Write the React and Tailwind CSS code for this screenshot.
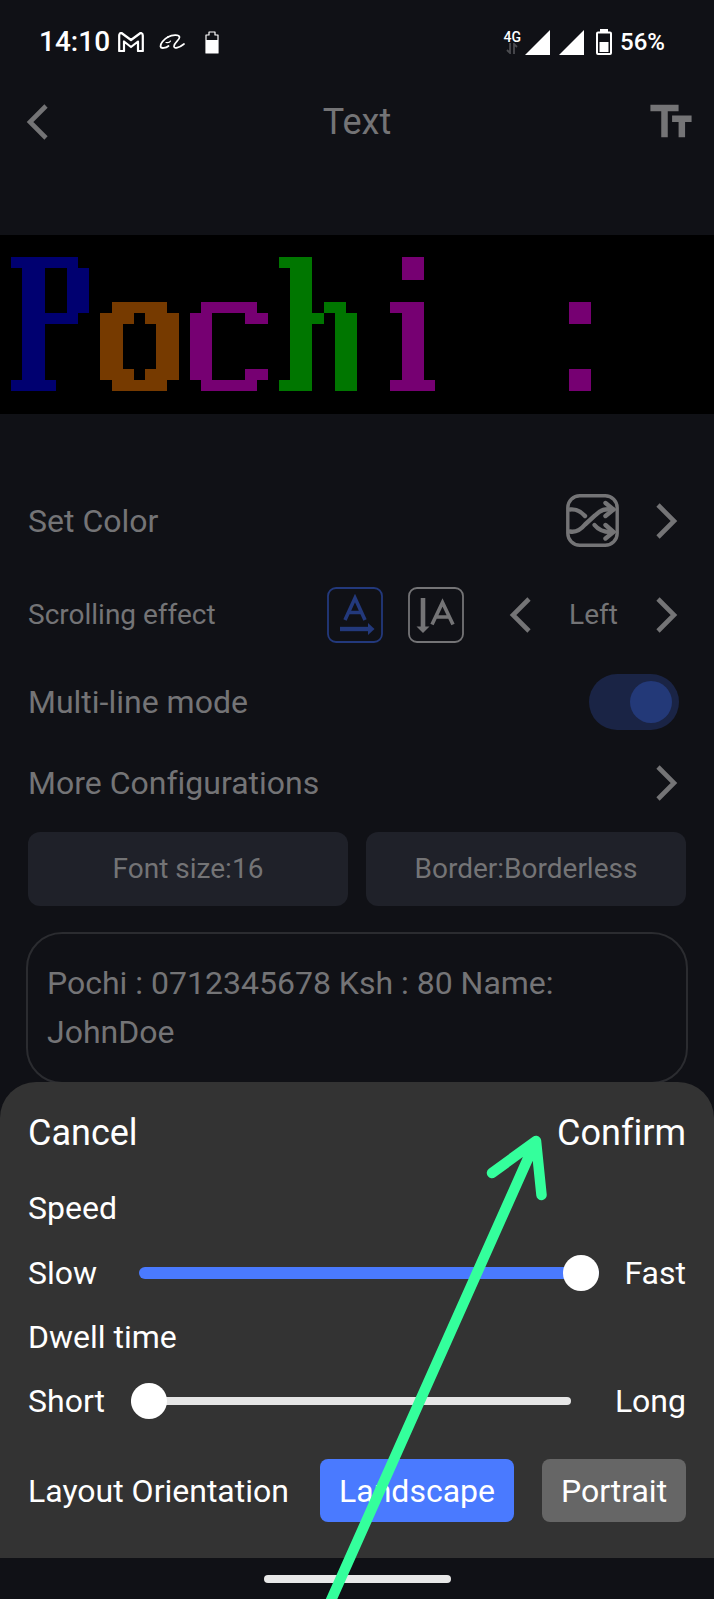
import { useState } from 'react';
import { MdTextFields } from 'react-icons/md';

// ── LED preview ──────────────────────────────────────────────────────────────
// 64 x 16 matrix. Each character is an 8-column cell; rows start at `top`.
const LED_CELLS = [
  {
    col: 1,
    top: 2,
    color: '#000070',
    rows: [
      '######..', '.##..##.', '.##..##.', '.##..##.', '.##..##.', '.#####..',
      '.##.....', '.##.....', '.##.....', '.##.....', '.##.....', '####....',
    ],
  },
  {
    col: 9,
    top: 6,
    color: '#763a00',
    rows: ['.#####..', '###.###.', '##...##.', '##...##.', '##...##.', '##...##.', '###.###.', '.#####..'],
  },
  {
    col: 17,
    top: 6,
    color: '#760072',
    rows: ['.#####..', '##...##.', '##......', '##......', '##......', '##......', '##...##.', '.#####..'],
  },
  {
    col: 25,
    top: 2,
    color: '#007600',
    rows: [
      '###.....', '.##.....', '.##.....', '.##.....', '.##.##..', '.###.##.',
      '.##..##.', '.##..##.', '.##..##.', '.##..##.', '.##..##.', '###..##.',
    ],
  },
  {
    col: 33,
    top: 2,
    color: '#760072',
    rows: [
      '...##...', '...##...', '........', '........', '..###...', '...##...',
      '...##...', '...##...', '...##...', '...##...', '...##...', '..####..',
    ],
  },
  {
    col: 49,
    top: 6,
    color: '#760072',
    rows: ['..##....', '..##....', '........', '........', '........', '........', '..##....', '..##....'],
  },
];

function LedPreview() {
  return (
    <svg viewBox="0 0 64 16" className="block w-full bg-black" shapeRendering="crispEdges" role="img" aria-label="Pochi :">
      {LED_CELLS.map((cell) =>
        cell.rows.map((row, y) =>
          [...row].map(
            (dot, x) =>
              dot === '#' && (
                <rect key={`${cell.col}-${y}-${x}`} x={cell.col + x} y={cell.top + y} width="1" height="1" fill={cell.color} />
              )
          )
        )
      )}
    </svg>
  );
}

// ── Icons ────────────────────────────────────────────────────────────────────
function Chevron({ left = false }) {
  return (
    <svg viewBox="0 0 24 40" className="block h-10 w-6" fill="none" stroke="currentColor" strokeWidth="4.6">
      <path d={left ? 'M21 4 5 20l16 16' : 'M3 4l16 16L3 36'} />
    </svg>
  );
}

function ShuffleIcon() {
  return (
    <svg viewBox="0 0 53 53" className="h-[53px] w-[53px]" fill="none" stroke="currentColor" strokeWidth="4.4" strokeLinecap="round">
      <rect x="1.8" y="1.8" width="49.4" height="49.4" rx="12" strokeWidth="3.4" />
      <path d="M4 15.500c7-.8 11 2 15 6.500M4 37.500c6 1 11-2 15-7l10-9c6-6 10-7 18-6" />
      <path d="M28.500 31c4 5 9 7.500 18 7" />
      <path d="M39.500 9l8 6.500-8 6.500M39.500 31l8 7-8 6.500" />
    </svg>
  );
}

function HorizontalIcon() {
  return (
    <svg viewBox="0 0 56 56" className="h-14 w-14" fill="none" stroke="currentColor">
      <rect x="1" y="1" width="54" height="54" rx="8" strokeWidth="1.8" />
      <path d="M18 33 28 11 38 33M21.500 25.500h13" strokeWidth="3.6" />
      <path d="M13 42h30" strokeWidth="4.4" />
      <path d="M41 36l6.500 6-6.500 6z" fill="currentColor" stroke="none" />
    </svg>
  );
}

function VerticalIcon() {
  return (
    <svg viewBox="0 0 56 56" className="h-14 w-14" fill="none" stroke="currentColor">
      <rect x="1" y="1" width="54" height="54" rx="8" strokeWidth="1.8" />
      <path d="M24 37.500 34.500 15.500 45 37.500M27.500 30h14" strokeWidth="3.6" />
      <path d="M15 11v30" strokeWidth="4.6" />
      <path d="M8.500 39.500h13L15 46z" fill="currentColor" stroke="none" />
    </svg>
  );
}

function StatusBar() {
  return (
    <div className="flex h-[84px] items-center justify-between pr-[49px] pl-[39px] text-white">
      <div className="flex items-center">
        <span className="text-[28px] leading-8 font-medium">14:10</span>
        <svg viewBox="0 0 26 20" className="ml-2 h-5 w-[26px]" fill="none" stroke="currentColor" strokeWidth="2.2" strokeLinejoin="round">
          <path d="M1.200 3.500Q1.200 1 3.500 1L13 8 22.500 1q2.300 0 2.300 2.500V19h-4.800V9.500L13 15 6 9.500V19H1.200z" />
        </svg>
        <svg viewBox="0 0 26 16" className="ml-[15px] h-4 w-[26px]" fill="none" stroke="currentColor" strokeLinecap="round">
          <path d="M9 3C5 5 1 10 1.500 12.500 2 15 7 14 9.500 12" strokeWidth="1.800" />
          <path d="M7 8.500c2 .3 4-.4 4.500-1.500" strokeWidth="1.200" />
          <path d="M9 3c4-2.200 11-3 11.500 0 .3 3-6 6-5.500 9.500.3 2.500 5 1.500 10-2.500" strokeWidth="1.700" />
        </svg>
        <svg viewBox="0 0 14 24" className="ml-5 h-6 w-[14px]">
          <path d="M1 5h3V2h6v3h3v18H1z" fill="none" stroke="currentColor" strokeWidth="1.200" strokeLinejoin="round" />
          <path d="M1 10h12v13H1z" fill="currentColor" />
        </svg>
      </div>
      <div className="flex items-center">
        <div className="flex flex-col items-center text-[14px] leading-3 font-medium">
          4G
          <svg viewBox="0 0 12 11" className="h-[11px] w-3 text-[#4b4c50]" fill="none" stroke="currentColor" strokeWidth="1.800">
            <path d="M4 0v10L1 7M8 11V1l3 3" />
          </svg>
        </div>
        {[0, 1].map((sim) => (
          <svg key={sim} viewBox="0 0 25 25" className={sim === 0 ? 'ml-1 h-[25px] w-[25px]' : 'ml-[9px] h-[25px] w-[25px]'} fill="currentColor">
            <path d="M25 0v25H0z" />
          </svg>
        ))}
        <svg viewBox="0 0 16 26" className="ml-3 h-[26px] w-4" fill="none" stroke="currentColor" strokeWidth="2">
          <rect x="1" y="3.500" width="14" height="21.500" rx="1" />
          <path d="M4 1.500h8" strokeWidth="3" />
          <path d="M3.500 13h9v10h-9z" fill="currentColor" stroke="none" />
        </svg>
        <span className="ml-2 text-2xl font-medium">56%</span>
      </div>
    </div>
  );
}

// ── Bottom sheet ─────────────────────────────────────────────────────────────
function SettingsSheet() {
  const [speed, setSpeed] = useState(100);
  const [dwell, setDwell] = useState(0);
  const [orientation, setOrientation] = useState('landscape');

  const sliderBase =
    'block h-9 appearance-none bg-transparent [&::-webkit-slider-runnable-track]:rounded-full [&::-webkit-slider-thumb]:size-9 [&::-webkit-slider-thumb]:appearance-none [&::-webkit-slider-thumb]:rounded-full [&::-webkit-slider-thumb]:bg-white';

  return (
    <section className="rounded-t-[36px] bg-[#333333] px-7 pb-[18px] text-[32px] text-white">
      <div className="flex h-[102px] items-center justify-between text-[36px]">
        <button type="button">Cancel</button>
        <button type="button">Confirm</button>
      </div>

      <label htmlFor="speed" className="flex h-12 items-center">Speed</label>
      <div className="grid h-[82px] grid-cols-[103px_1fr_87px] items-center">
        <span>Slow</span>
        <input
          id="speed"
          type="range"
          value={speed}
          onChange={(e) => setSpeed(Number(e.target.value))}
          className={`${sliderBase} ml-2 [&::-webkit-slider-runnable-track]:h-3 [&::-webkit-slider-runnable-track]:bg-[#4a7aff] [&::-webkit-slider-thumb]:-mt-3`}
        />
        <span className="text-right">Fast</span>
      </div>

      <label htmlFor="dwell" className="flex h-[46px] items-center">Dwell time</label>
      <div className="grid h-[82px] grid-cols-[103px_1fr_87px] items-center">
        <span>Short</span>
        <input
          id="dwell"
          type="range"
          value={dwell}
          onChange={(e) => setDwell(Number(e.target.value))}
          className={`${sliderBase} mr-7 [&::-webkit-slider-runnable-track]:h-2 [&::-webkit-slider-runnable-track]:bg-[#e6e6e6] [&::-webkit-slider-thumb]:-mt-[14px]`}
        />
        <span className="text-right">Long</span>
      </div>

      <div className="flex h-[98px] items-center">
        <span className="flex-1">Layout Orientation</span>
        <button
          type="button"
          onClick={() => setOrientation('landscape')}
          className={`h-[63px] w-[194px] rounded-lg ${orientation === 'landscape' ? 'bg-[#4a7aff]' : 'bg-[#666666]'}`}
        >
          Landscape
        </button>
        <button
          type="button"
          onClick={() => setOrientation('portrait')}
          className={`ml-7 h-[63px] w-36 rounded-lg ${orientation === 'portrait' ? 'bg-[#4a7aff]' : 'bg-[#666666]'}`}
        >
          Portrait
        </button>
      </div>
    </section>
  );
}

export default function App() {
  const [text, setText] = useState('Pochi : 0712345678 Ksh : 80 Name: JohnDoe');
  const [multiLine, setMultiLine] = useState(true);

  return (
    <div className="flex min-h-screen flex-col overflow-hidden bg-[#101116] font-['Roboto',sans-serif] text-[#747476] [font-variant-ligatures:none]">
      <StatusBar />

      {/* Title bar */}
      <header className="grid h-[76px] grid-cols-[1fr_auto_1fr] items-center px-[17px]">
        <button type="button" aria-label="Back" className="ml-2 justify-self-start">
          <Chevron left />
        </button>
        <h1 className="text-[36px] leading-10">Text</h1>
        <button type="button" aria-label="Text style" className="justify-self-end">
          <MdTextFields size={52} />
        </button>
      </header>

      <div className="mt-[75px]">
        <LedPreview />
      </div>

      {/* Settings */}
      <main className="flex flex-col px-7 pt-[60px] text-[32px]">
        <div className="flex h-[94px] items-center pr-[7px]">
          <span className="flex-1">Set Color</span>
          <button type="button" aria-label="Random color" className="mr-9">
            <ShuffleIcon />
          </button>
          <button type="button" aria-label="Choose color"><Chevron /></button>
        </div>

        <div className="flex h-[94px] items-center pr-[7px] text-[28px]">
          <span className="flex-1">Scrolling effect</span>
          <button type="button" aria-label="Horizontal" className="text-[#23397c]">
            <HorizontalIcon />
          </button>
          <button type="button" aria-label="Vertical" className="mr-11 ml-[25px]">
            <VerticalIcon />
          </button>
          <button type="button" aria-label="Previous effect"><Chevron left /></button>
          <span className="w-[123px] text-center">Left</span>
          <button type="button" aria-label="Next effect"><Chevron /></button>
        </div>

        <label className="flex h-20 items-center justify-between pr-[7px]">
          Multi-line mode
          <input
            type="checkbox"
            role="switch"
            checked={multiLine}
            onChange={(e) => setMultiLine(e.target.checked)}
            className="flex h-14 w-[90px] appearance-none items-center rounded-full bg-[#1a2445] px-[7px] before:size-[42px] before:rounded-full before:bg-[#233978] checked:justify-end"
          />
        </label>

        <div className="flex h-[82px] items-center justify-between pr-[7px]">
          <span>More Configurations</span>
          <button type="button" aria-label="More configurations"><Chevron /></button>
        </div>

        <div className="mt-2 grid grid-cols-2 gap-[18px] text-[28px]">
          <button type="button" className="h-[74px] rounded-xl bg-[#1f2129]">Font size:16</button>
          <button type="button" className="h-[74px] rounded-xl bg-[#1f2129]">Border:Borderless</button>
        </div>

        <textarea
          aria-label="Message"
          value={text}
          onChange={(e) => setText(e.target.value)}
          className="-mx-[2px] mt-[26px] block h-[152px] resize-none overflow-hidden rounded-[36px] border-2 border-[#2b2c30] px-[19px] pt-[25px] leading-[49px]"
        />
      </main>

      <div className="relative -mt-[2px] flex flex-1 flex-col">
        <SettingsSheet />
        <div className="flex h-[42px] items-center justify-center">
          <div className="h-2 w-[187px] rounded-full bg-[#e8e8e8]" />
        </div>

        {/* Arrow pointing at Confirm */}
        <svg
          viewBox="0 0 240 479"
          className="pointer-events-none absolute right-[154px] bottom-0 h-[479px] w-[240px]"
          fill="none"
          stroke="#34ff9c"
          strokeWidth="10.500"
          strokeLinecap="round"
          strokeLinejoin="round"
        >
          <path d="M172 52 216 20l5.500 54M214 24 8 486" />
        </svg>
      </div>
    </div>
  );
}
